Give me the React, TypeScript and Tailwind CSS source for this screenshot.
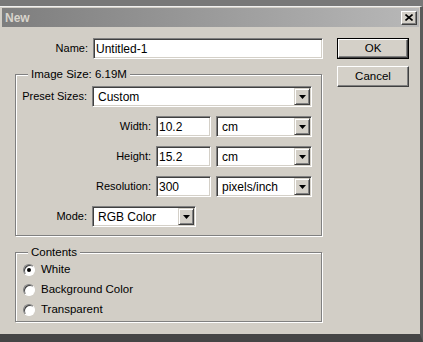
import React from "react";

const sunken =
  "bg-white border border-t-[#808080] border-l-[#808080] border-b-white border-r-white shadow-[inset_1px_1px_0_#404040,inset_-1px_-1px_0_#d4d0c8]";

function Arrow() {
  return (
    <div className="w-[16px] h-full bg-[#d4d0c8] border border-t-[#d4d0c8] border-l-[#d4d0c8] border-b-[#404040] border-r-[#404040] shadow-[inset_1px_1px_0_#fff,inset_-1px_-1px_0_#808080] flex items-center justify-center">
      <svg width="7" height="4" viewBox="0 0 7 4">
        <path d="M0 0H7L3.5 4Z" fill="#000" />
      </svg>
    </div>
  );
}

function Select({ value, w }: { value: string; w: string }) {
  return (
    <div className={`${sunken} ${w} h-[21px] flex items-stretch p-[1px]`}>
      <div className="flex-1 flex items-center pl-[4px] text-[12px]">{value}</div>
      <Arrow />
    </div>
  );
}

function Input({ value, w }: { value: string; w: string }) {
  return (
    <div className={`${sunken} ${w} h-[21px] flex items-center pl-[2px] text-[12px]`}>{value}</div>
  );
}

function Radio({ label, checked }: { label: string; checked?: boolean }) {
  return (
    <div className="flex items-center h-[20px]">
      <div className="ml-[7px] w-[12px] h-[12px] rounded-full bg-white border border-t-[#808080] border-l-[#808080] border-b-white border-r-white shadow-[inset_1px_1px_0_#404040] flex items-center justify-center">
        {checked && <div className="w-[4px] h-[4px] rounded-full bg-black" />}
      </div>
      <span className="ml-[6px]">{label}</span>
    </div>
  );
}

function Button({ label, isDefault }: { label: string; isDefault?: boolean }) {
  return isDefault ? (
    <div className="w-[72px] h-[21px] border border-black">
      <div className="w-full h-full bg-[#d4d0c8] border border-t-white border-l-white border-b-[#404040] border-r-[#404040] shadow-[inset_-1px_-1px_0_#808080] flex items-center justify-center">
        {label}
      </div>
    </div>
  ) : (
    <div className="w-[72px] h-[21px] bg-[#d4d0c8] border border-t-white border-l-white border-b-[#404040] border-r-[#404040] shadow-[inset_-1px_-1px_0_#808080] flex items-center justify-center">
      {label}
    </div>
  );
}

function Row({ label, labelW, children }: { label: string; labelW: string; children: React.ReactNode }) {
  return (
    <div className="flex items-center h-[21px] gap-[5px]">
      <div className={`${labelW} text-right text-[11px]`}>{label}</div>
      {children}
    </div>
  );
}

export default function App() {
  return (
    <div className="w-[423px] h-[342px] bg-[#7b7b7b] flex flex-col font-['Liberation_Sans',Arial,sans-serif] text-[11.5px] text-black leading-none">
      <div className="h-[6px] bg-[#787878]" />
      <div className="flex-1 flex flex-col bg-[#d2cec6] border-t border-t-[#f0f0f0] border-r-[3px] border-r-[#5a5a5a] border-b-[8px] border-b-[#454545] pl-[2px] pt-[1px] pr-[1px]">
        <div className="h-[19px] bg-gradient-to-r from-[#7e7e7e] to-[#b8b8b8] flex items-center justify-between pl-[3px] pr-[2px]">
          <span className="font-bold text-[12px] text-[#d8d4cc]">New</span>
          <div className="w-[16px] h-[14px] bg-[#d4d0c8] border border-t-white border-l-white border-b-[#404040] border-r-[#404040] shadow-[inset_-1px_-1px_0_#808080] flex items-center justify-center">
            <svg width="8" height="7" viewBox="0 0 8 7">
              <path d="M0.5 0.5L7.5 6.5M7.5 0.5L0.5 6.5" stroke="#000" strokeWidth="1.6" />
            </svg>
          </div>
        </div>
        <div className="flex pt-[11px]">
          <div className="flex flex-col w-[323px]">
            <Row label="Name:" labelW="w-[86px]">
              <Input value="Untitled-1" w="w-[230px]" />
            </Row>
            <fieldset className="mt-[8px] ml-[13px] w-[307px] border border-[#808080] shadow-[inset_1px_1px_0_#fff,1px_1px_0_#fff] pt-[5px] pb-[8px] flex flex-col gap-[9px]">
              <legend className="ml-[12px] px-[3px] bg-[#d2cec6] leading-[14px]">Image Size: 6.19M</legend>
              <Row label="Preset Sizes:" labelW="w-[71px]">
                <Select value="Custom" w="w-[220px]" />
              </Row>
              <Row label="Width:" labelW="w-[135px]">
                <Input value="10.2" w="w-[55px]" />
                <Select value="cm" w="w-[96px]" />
              </Row>
              <Row label="Height:" labelW="w-[135px]">
                <Input value="15.2" w="w-[55px]" />
                <Select value="cm" w="w-[96px]" />
              </Row>
              <Row label="Resolution:" labelW="w-[135px]">
                <Input value="300" w="w-[55px]" />
                <Select value="pixels/inch" w="w-[96px]" />
              </Row>
              <Row label="Mode:" labelW="w-[71px]">
                <Select value="RGB Color" w="w-[104px]" />
              </Row>
            </fieldset>
            <fieldset className="mt-[9px] ml-[13px] w-[307px] border border-[#808080] shadow-[inset_1px_1px_0_#fff,1px_1px_0_#fff] pt-[1px] pb-[1px] flex flex-col">
              <legend className="ml-[12px] px-[3px] bg-[#d2cec6] leading-[14px]">Contents</legend>
              <Radio label="White" checked />
              <Radio label="Background Color" />
              <Radio label="Transparent" />
            </fieldset>
          </div>
          <div className="ml-[12px] flex flex-col gap-[7px]">
            <Button label="OK" isDefault />
            <Button label="Cancel" />
          </div>
        </div>
      </div>
    </div>
  );
}
